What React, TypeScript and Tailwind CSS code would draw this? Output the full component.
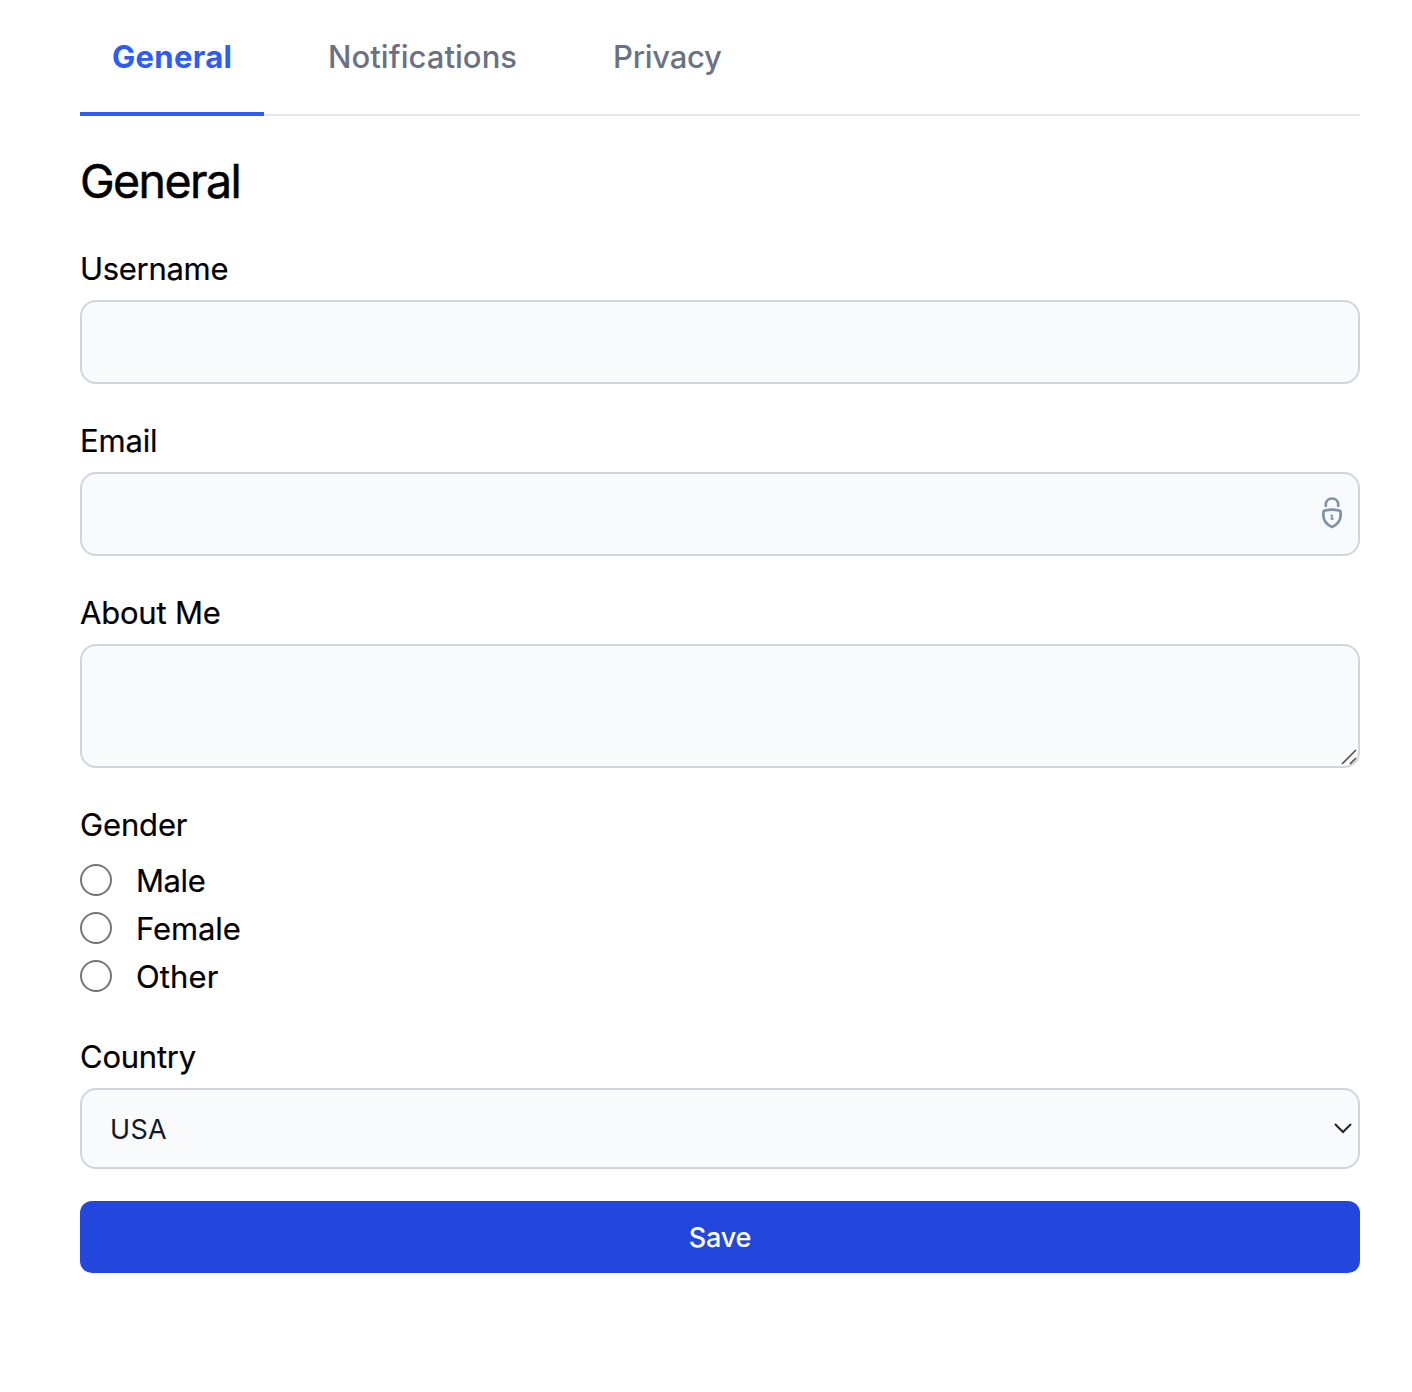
import React from "react";

const box = "mt-[7px] block w-full rounded-2xl border-2 border-[#d2d5dc] bg-[#f9fafc] outline-none";

const genders = [
  { name: "Male", tracking: "tracking-[-0.4px]" },
  { name: "Female", tracking: "tracking-[-0.1px]" },
  { name: "Other", tracking: "tracking-[0.1px]" },
];

function LockIcon() {
  return (
    <svg className="pointer-events-none absolute right-[17px] top-[25px] h-8 w-[22px]" viewBox="0 0 22 32" fill="none" stroke="#7f93a7">
      <path d="M4.8 10V7.5C4.8 4 7.4 1.5 11 1.5s6.2 2.5 6.2 6V10" strokeWidth="2.6" />
      <path d="M2.4 15.2C2.4 14.2 3 13.6 4.2 13.4c4.4-.9 9.2-.9 13.6 0 1.2.2 1.8.8 1.8 1.8v3.2c0 4.8-3.2 9-8.6 11.6-5.4-2.6-8.6-6.8-8.6-11.6z" strokeWidth="2.7" strokeLinejoin="round" />
      <path d="M9.4 18.5H12M9.4 22h3.4M11 18v4" strokeWidth="1.6" />
    </svg>
  );
}

export default function App() {
  return (
    <main className="h-[1392px] bg-white pl-20 pr-[52px] font-['Inter',sans-serif] text-[31px] leading-[48px] text-black">
      <nav className="flex h-[116px] border-b-2 border-gray-200 font-medium text-gray-500">
        <a className="h-[116px] w-[184px] border-b-4 border-[#2e5cf6] px-8 pt-[33px] font-bold tracking-[0.3px] text-[#2e5cf6]">General</a>
        <a className="ml-8 w-[253px] px-8 pt-[33px] tracking-[0.05px]">Notifications</a>
        <a className="ml-8 px-8 pt-[33px] tracking-[-0.25px]">Privacy</a>
      </nav>
      <h1 className="pt-[33px] text-[46.5px] font-normal leading-[64px] tracking-[-1.6px] [-webkit-text-stroke:0.5px_black]">General</h1>
      <form className="font-normal" onSubmit={(event) => event.preventDefault()}>
        <label className="mt-8 block tracking-[-0.3px] [-webkit-text-stroke:0.2px_black]" htmlFor="username">Username</label>
        <input id="username" className={`${box} h-[84px] px-5`} />

        <label className="mt-[33px] block tracking-[-0.15px] [-webkit-text-stroke:0.2px_black]" htmlFor="email">Email</label>
        <div className="relative">
          <input id="email" className={`${box} h-[84px] px-5`} />
          <LockIcon />
        </div>

        <label className="mt-[33px] block tracking-[-0.2px] [-webkit-text-stroke:0.2px_black]" htmlFor="about">About Me</label>
        <div className="relative">
          <textarea id="about" className={`${box} h-[124px] resize-none px-5`} />
          <svg className="pointer-events-none absolute bottom-[3px] right-[3px] h-4 w-4" viewBox="0 0 16 16" stroke="#555" strokeWidth="1.7">
            <path d="M1 15 15 1M9 15l6-6" />
          </svg>
        </div>

        <fieldset className="mt-[33px] [-webkit-text-stroke:0.2px_black]">
          <legend className="tracking-[-0.15px]">Gender</legend>
          <div className="mt-[7px] flex flex-col">
            {genders.map(({ name, tracking }) => (
              <label key={name} className={`flex h-12 items-center gap-6 ${tracking}`}>
                <input type="radio" name="gender" className="h-8 w-8 appearance-none rounded-full border-2 border-[#767676] bg-white" />
                <span className="pt-0.5">{name}</span>
              </label>
            ))}
          </div>
        </fieldset>

        <label className="mt-[29px] block pt-1 tracking-[-0.25px] [-webkit-text-stroke:0.2px_black]" htmlFor="country">Country</label>
        <div className="relative">
          <select id="country" className={`${box} h-[81px] appearance-none px-7 pt-0.5 text-[27px] font-normal tracking-[0.3px] text-[#111827]`}>
            <option>USA</option>
          </select>
          <svg className="pointer-events-none absolute right-2 top-[34px] h-3 w-[18px]" viewBox="0 0 18 12" fill="none" stroke="#1e2433" strokeWidth="2">
            <path d="m1 2 8 8 8-8" />
          </svg>
        </div>
        <button className="mt-8 block h-[72px] w-full rounded-xl bg-[#2347dd] pt-px text-[27px] font-medium tracking-[-0.2px] text-white">Save</button>
      </form>
    </main>
  );
}
